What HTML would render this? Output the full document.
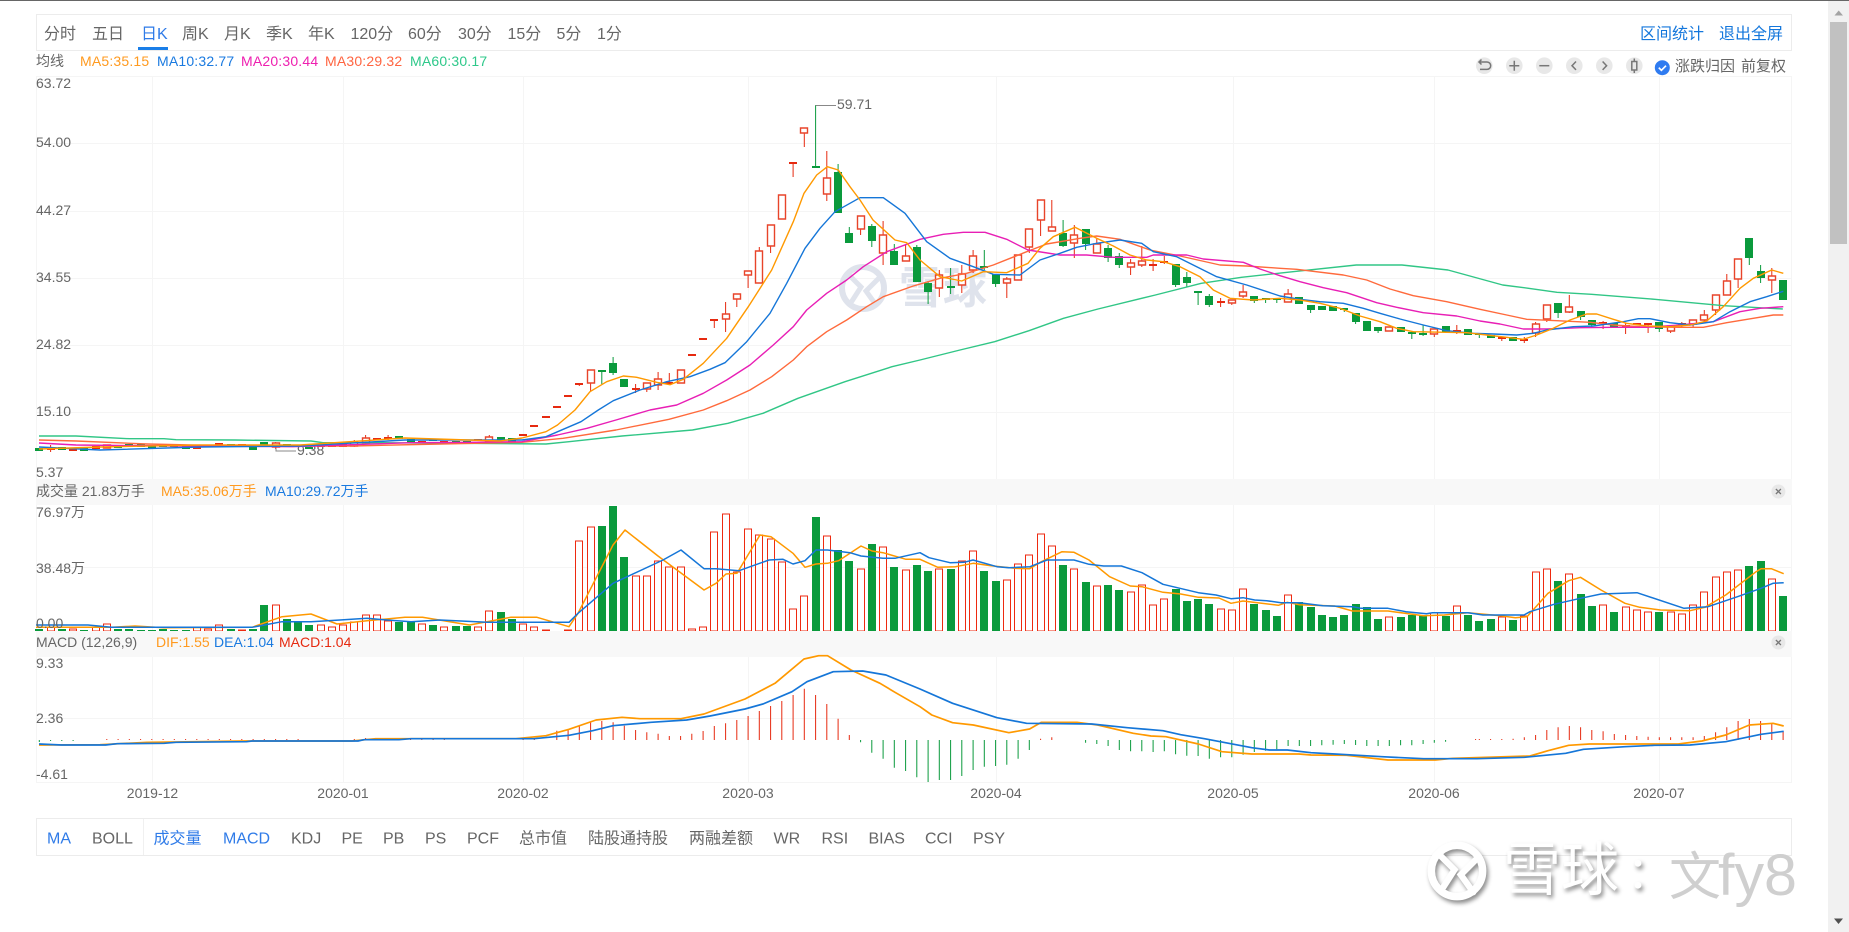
<!DOCTYPE html>
<html lang="zh-CN"><head><meta charset="utf-8"><title>K线</title>
<style>
html,body{margin:0;padding:0;background:#fff;overflow:hidden;width:1849px;height:932px}
svg{display:block;font-family:"Liberation Sans","Noto Sans CJK SC",sans-serif}
.a{font-size:14px;fill:#666}
.t{font-size:16px;fill:#666}
.b{font-size:16px;fill:#2f7be8}
.l{font-size:14px;letter-spacing:.18px}
</style></head><body>
<svg width="1849" height="932" viewBox="0 0 1849 932" xmlns="http://www.w3.org/2000/svg">
<rect width="1849" height="932" fill="#fff"/>
<rect width="1849" height="1" fill="#666"/>
<!-- top toolbar -->
<rect x="36.5" y="14.5" width="1755" height="36" fill="#fff" stroke="#ececec"/>
<text class="t" x="44" y="39">分时</text><text class="t" x="92" y="39">五日</text>
<text class="b" x="141" y="39">日K</text><text class="t" x="182" y="39">周K</text><text class="t" x="224" y="39">月K</text><text class="t" x="266" y="39">季K</text><text class="t" x="308" y="39">年K</text>
<text class="t" x="350.5" y="39">120分</text><text class="t" x="408" y="39">60分</text><text class="t" x="458" y="39">30分</text><text class="t" x="507.5" y="39">15分</text><text class="t" x="556.5" y="39">5分</text><text class="t" x="597" y="39">1分</text>
<rect x="138" y="47" width="30" height="3" fill="#1a7ee8"/>
<text class="t" x="1640" y="39" style="fill:#1477dc">区间统计</text><text class="t" x="1719" y="39" style="fill:#1477dc">退出全屏</text>
<!-- legend -->
<text class="a" x="36" y="66">均线</text>
<text class="l" x="80" y="66" fill="#ff9a1f">MA5:35.15</text>
<text class="l" x="157" y="66" fill="#1a7ae0">MA10:32.77</text>
<text class="l" x="241" y="66" fill="#ee1fb0">MA20:30.44</text>
<text class="l" x="325" y="66" fill="#ff6440">MA30:29.32</text>
<text class="l" x="410" y="66" fill="#2ec88a">MA60:30.17</text>
<!-- tool icons -->
<g fill="#e8e8e8"><circle cx="1484.3" cy="65.7" r="8.3"/><circle cx="1514.3" cy="65.7" r="8.3"/><circle cx="1544.3" cy="65.7" r="8.3"/><circle cx="1574.3" cy="65.7" r="8.3"/><circle cx="1604.3" cy="65.7" r="8.3"/><circle cx="1634.3" cy="65.7" r="8.3"/></g>
<g fill="none" stroke="#777" stroke-width="1.5">
<path d="M1479 62H1487a3.7 3.7 0 0 1 0 7.4H1480M1481.5 59.5L1479 62l2.5 2.5"/>
<path d="M1509.3 65.7h10M1514.3 60.7v10"/><path d="M1539.3 65.7h10"/>
<path d="M1576 61.5l-4 4.2 4 4.2"/><path d="M1602.6 61.5l4 4.2-4 4.2"/>
<path d="M1631.8 61.5h5v8.5h-5zM1634.3 58.5v3M1634.3 70v3"/></g>
<circle cx="1662.3" cy="67.7" r="7.5" fill="#2f7bf0"/><path d="M1658.8 67.7l2.6 2.6 4.6-4.6" fill="none" stroke="#fff" stroke-width="1.7"/>
<text x="1675" y="71" fill="#666" font-size="15">涨跌归因</text><text x="1741" y="71" fill="#666" font-size="15">前复权</text>
<!-- grids -->
<g stroke="#f5f5f5" fill="none">
<path d="M36.5 76V782M152.5 76V782M343.5 76V782M523.5 76V782M748.5 76V782M996.5 76V782M1233.5 76V782M1434.5 76V782M1659.5 76V782M1791.5 76V782"/>
<path d="M36 76.5H1792M36 143.5H1792M36 211.5H1792M36 278.5H1792M36 345.5H1792M36 412.5H1792M36 480.5H1792M36 567.5H1792M36 718.5H1792M36 782.5H1792"/>
</g>
<!-- centre watermark -->
<g transform="translate(863,288)" fill="none" stroke="#dfe3ec" stroke-width="6" stroke-linecap="round"><circle r="21"/><path d="M-13 -12L-2 -1L-11 13M15 -9L3 3L13 17" stroke-width="5"/></g>
<text x="899" y="303" font-size="44" font-weight="700" fill="#dfe3ec" style="font-family:'Noto Sans CJK SC',sans-serif">雪球</text>
<!-- axis labels -->
<text class="a" x="36" y="88">63.72</text><text class="a" x="36" y="147">54.00</text><text class="a" x="36" y="215">44.27</text><text class="a" x="36" y="282">34.55</text><text class="a" x="36" y="349">24.82</text><text class="a" x="36" y="416">15.10</text><text class="a" x="36" y="477">5.37</text>
<!-- candle wicks -->
<path fill="none" stroke="#e62a10" d="M50.6 445V452M275.6 442V449M354.3 440V447M365.6 435V444M388.1 435V440M489.3 435V442M579.3 383V386M590.6 370V391M635.6 384V393M646.8 383V392M658.1 372V390M669.3 373V385M714.3 320V328M725.6 302V332M736.8 294V307M748.1 271V288M759.3 247V283M770.6 225V253M793.1 163V177M804.3 128V147M826.8 151V201M860.6 216V235M883.1 221V265M905.6 245V261M939.3 270V297M961.8 265V293M973.1 250V273M1006.8 277V298M1029.3 229V253M1040.6 200V236M1051.8 200V231M1074.3 225V258M1096.8 238V253M1130.6 259V275M1141.8 246V267M1153.1 259V271M1164.3 256V264M1220.6 298V307M1231.8 300V305M1243.1 285V298M1288.1 289V302M1434.3 329V337M1456.8 325V334M1501.8 338V341M1524.3 337V343M1535.6 322V337M1546.8 305V322M1569.3 295V313M1603.1 321V329M1625.6 323V334M1648.1 324V333M1670.6 326V333M1681.8 322V327M1693.1 320V327M1704.3 310V323M1715.6 295V315M1726.8 274V295M1738.1 259V288M1771.8 268V293"/>
<path fill="none" stroke="#0a9a3c" d="M601.8 370V384M613.1 357V375M815.6 105V167M838.1 164V172M849.3 227V233M871.8 224V247M894.3 244V251M916.8 245V247M928.1 281V304M950.6 268V294M984.3 250V270M995.6 284V287M1063.1 220V247M1085.6 244V250M1108.1 245V262M1119.3 253V268M1175.6 285V287M1186.8 272V287M1198.1 292V305M1209.3 294V307M1254.3 300V303M1265.6 299V303M1276.8 299V303M1310.6 310V313M1344.3 310V312M1355.6 322V324M1378.1 331V333M1411.8 334V339M1423.1 325V336M1479.3 335V338M1558.1 313V318M1580.6 317V320M1591.8 325V327M1659.3 329V332M1749.3 258V265M1760.6 265V283"/>
<!-- min/max marks -->
<path fill="none" stroke="#888" d="M815.6 105.5H836M276 443V451H296"/>
<text class="a" x="837" y="109">59.71</text><text class="a" x="297" y="455">9.38</text>
<!-- candle bodies: green -->
<path fill="#0a9a3c" d="M35 448h8V451h-8zM58 447h8V450h-8zM80 448h8V451h-8zM114 445h8V448h-8zM125 444h8V447h-8zM137 444h8V447h-8zM148 445h8V448h-8zM159 445h8V447h-8zM170 445h8V447h-8zM182 446h8V449h-8zM227 444h8V446h-8zM249 446h8V450h-8zM260 442h8V445h-8zM283 444h8V446h-8zM294 445h8V447h-8zM305 447h8V449h-8zM395 436h8V439h-8zM407 439h8V443h-8zM429 439h8V441h-8zM452 441h8V443h-8zM463 441h8V444h-8zM497 437h8V441h-8zM508 438h8V442h-8zM598 370h8V372h-8zM609 363h8V373h-8zM620 379h8V387h-8zM812 166h8V168h-8zM834 172h8V213h-8zM845 233h8V243h-8zM868 226h8V241h-8zM890 251h8V265h-8zM913 247h8V282h-8zM924 283h8V292h-8zM947 286h8V288h-8zM980 266h8V268h-8zM992 274h8V284h-8zM1059 233h8V246h-8zM1082 229h8V244h-8zM1104 248h8V258h-8zM1115 256h8V265h-8zM1172 264h8V285h-8zM1183 277h8V283h-8zM1194 291h8V293h-8zM1205 296h8V305h-8zM1250 296h8V301h-8zM1262 298h8V300h-8zM1273 298h8V300h-8zM1295 297h8V304h-8zM1307 305h8V310h-8zM1318 306h8V310h-8zM1329 306h8V311h-8zM1340 308h8V310h-8zM1352 313h8V322h-8zM1363 321h8V331h-8zM1374 327h8V331h-8zM1397 327h8V332h-8zM1408 332h8V334h-8zM1419 333h8V335h-8zM1442 326h8V332h-8zM1464 329h8V335h-8zM1475 333h8V335h-8zM1487 335h8V338h-8zM1509 337h8V341h-8zM1554 303h8V313h-8zM1577 311h8V317h-8zM1588 320h8V325h-8zM1610 323h8V327h-8zM1655 322h8V329h-8zM1745 238h8V258h-8zM1757 271h8V278h-8zM1779 280h8V300h-8z"/>
<!-- red solid -->
<path fill="#e62a10" d="M47 447h8V450h-8zM69 448h8V451h-8zM92 446h8V449h-8zM193 446h8V449h-8zM204 445h8V447h-8zM215 443h8V445h-8zM238 444h8V446h-8zM317 445h8V447h-8zM328 445h8V447h-8zM339 444h8V447h-8zM373 438h8V440h-8zM384 437h8V439h-8zM418 441h8V443h-8zM440 441h8V443h-8zM474 439h8V441h-8zM519 434h8V436h-8zM530 425h8V427h-8zM542 416h8V418h-8zM553 406h8V408h-8zM564 395h8V397h-8zM575 383h8V385h-8zM632 388h8V390h-8zM665 382h8V384h-8zM688 354h8V356h-8zM699 338h8V340h-8zM710 319h8V321h-8zM789 162h8V164h-8zM1149 264h8V266h-8zM1160 261h8V263h-8zM1217 301h8V303h-8zM1453 330h8V332h-8zM1498 337h8V339h-8zM1520 339h8V341h-8zM1599 322h8V324h-8zM1622 325h8V327h-8zM1633 323h8V325h-8zM1644 323h8V325h-8zM1678 323h8V325h-8z"/>
<!-- red hollow -->
<path fill="#fff" stroke="#e8442a" stroke-width="1.4" d="M103.5 445h7V448h-7zM272.5 443h7V447h-7zM350.5 442h7V446h-7zM362.5 438h7V443h-7zM485.5 437h7V441h-7zM587.5 370h7V383h-7zM643.5 383h7V389h-7zM654.5 379h7V385h-7zM677.5 370h7V383h-7zM722.5 314h7V319h-7zM733.5 294h7V299h-7zM744.5 271h7V275h-7zM755.5 251h7V283h-7zM767.5 225h7V246h-7zM778.5 195h7V219h-7zM800.5 128h7V133h-7zM823.5 178h7V194h-7zM857.5 216h7V229h-7zM879.5 235h7V253h-7zM902.5 256h7V261h-7zM935.5 275h7V288h-7zM958.5 274h7V285h-7zM969.5 256h7V270h-7zM1003.5 279h7V283h-7zM1014.5 255h7V280h-7zM1025.5 229h7V247h-7zM1037.5 200h7V220h-7zM1048.5 227h7V231h-7zM1070.5 235h7V243h-7zM1093.5 244h7V253h-7zM1127.5 263h7V267h-7zM1138.5 261h7V265h-7zM1228.5 300h7V303h-7zM1239.5 292h7V296h-7zM1284.5 294h7V302h-7zM1385.5 327h7V331h-7zM1430.5 329h7V334h-7zM1532.5 324h7V333h-7zM1543.5 305h7V319h-7zM1565.5 307h7V312h-7zM1667.5 326h7V331h-7zM1689.5 320h7V324h-7zM1700.5 315h7V320h-7zM1712.5 295h7V310h-7zM1723.5 281h7V295h-7zM1734.5 259h7V279h-7zM1768.5 276h7V280h-7z"/>
<!-- MA lines -->
<g fill="none" stroke-width="1.4" stroke-linejoin="round">
<polyline stroke="#31c686" points="39,436 76,436 129,438.7 164,438.7 176,439.7 235,440 311,441 323,442.7 381,442.7 458,443.3 546,444 569,441.7 622,436 692.5,430 728,423.3 763,413.3 798,398.3 845,381.7 892,366.7 920,360 960,350 994.6,341.7 1029,330.7 1063.5,318.3 1098,309 1155.4,295 1201.3,283.3 1241.5,277.3 1293,271.7 1356.3,265 1402,265 1448,270 1502.7,285 1528.5,288.3 1557,292.3 1591.6,294.3 1654.8,299.3 1723.7,305.7 1782.8,309"/>
<polyline stroke="#ff6a3c" points="39,440 76,441 147,444 235,446 352,446 440,444 522,442.3 563,438.3 616,430 669,419.3 703.3,410 726.7,400.7 750,390 771.7,376.7 793.3,360 806.7,346.7 826.7,331.7 846.7,320 866.7,306.7 883.3,296.7 913.3,286 940,278.3 966.7,273.3 993.3,265 1026.7,251.7 1046.7,244 1080,238.3 1096.7,236 1120,239.3 1150,250 1180,256 1220,265 1246.7,266 1280,268.3 1296.7,269.3 1343.3,275 1366.7,280 1390,289 1413.3,295.7 1446.7,301.7 1480,309.3 1506.7,315 1526.7,319.3 1556.7,320.7 1590,322.3 1613.3,325 1640,326.7 1680,327.3 1703.3,327.3 1726.7,322.7 1753.3,318.3 1773.3,315 1783.3,315"/>
<polyline stroke="#e81fb5" points="39,443 76,445 176,446 293,446.7 411,442.7 469.5,442.3 522,441.7 557.5,435 587,428.3 616,420 650,410 676.7,405 703.3,393.3 726.7,380 750,365 773.3,345 793.3,326.7 806.7,310 826.7,293.3 846.7,280 863.3,266.7 886.7,251.7 920,239.3 943.3,234.3 963.3,232.3 985,232.3 1006.7,239.3 1028,250 1060,255 1086.7,255 1113.3,257.3 1146.7,257.3 1153.3,255 1186.7,255 1203.3,259 1243.3,262.3 1260,269 1280,275.7 1300,281.7 1323.3,287.7 1346.7,292.7 1376.7,302.7 1396.7,307.3 1423.3,312.7 1456.7,316 1480,321 1500,324 1523.3,329 1546.7,329 1580,327.7 1613.3,327.3 1646.7,327.3 1680,325 1713.3,321.7 1740,311.7 1760,308.3 1783.3,306.7"/>
<polyline stroke="#1576d8" points="39,447 100,450 200,447 300,446 405,440 522,440 546,436.7 581,421.7 598.3,410 613.3,400.7 640,390 666.7,381.7 690,376.7 710,369.3 725,362.7 746.7,341.7 770,313.3 786.7,283.3 805,248.3 820,228.3 835,211.7 860,197.7 883.3,197.7 905,213.3 926.7,241.7 950,258.3 973.3,266.7 993.3,274.3 1020,275 1040,260 1060,253.3 1076.7,247.3 1096.7,243.3 1120,240 1141.7,243.3 1153.3,251.7 1176.7,256.7 1196.7,266.7 1216.7,276.7 1246.7,285 1280,296 1300,299.3 1320,301.7 1343.3,303.3 1363.3,308.3 1380,313.3 1400,319 1423.3,325 1446.7,330.7 1473.3,333.3 1493.3,334 1516.7,335 1533.3,333.3 1546.7,330 1573.3,326.7 1593.3,326 1623.3,321.7 1638.3,318.7 1650,318.7 1670,322.7 1690,325 1713.3,321.7 1730,311.7 1750,301.7 1766.7,296.7 1783.3,291.3"/>
<polyline stroke="#ff9900" points="39,449 100,447 200,445 300,445 405,438 500,441 522,438 546,431.7 557.5,425 575,410 590,391.7 606.7,381.7 623.3,376 636.7,377.3 656.7,382.3 670,384.7 683.3,379.3 703.3,363.3 726.7,338.3 748.3,306.7 771.7,270 793.3,221.7 804,193.3 816.7,175 827.3,166.7 838.3,170 850,186.7 860,200 873,220 895,240 906.7,242.7 920,260 940,276.7 961.7,281 983.3,271.7 1006.7,272.7 1028,263.3 1040,248.3 1053.3,236.7 1075,227.3 1096.7,238.3 1113.3,246 1130,255 1146.7,260 1163.3,261.7 1180,266.7 1200,276.7 1213.3,290 1230,298.3 1253.3,300 1280,298.3 1300,300 1320,303.3 1340,308.3 1360,316 1380,321.7 1396.7,328.3 1413.3,331.7 1446.7,332.3 1466.7,332.7 1486.7,335 1506.7,337.3 1523.3,339.3 1536.7,335 1553.3,328.3 1570,320 1586.7,314 1596.7,314 1613.3,319.3 1626.7,323.3 1646.7,326 1670,326.7 1690,325 1706.7,321 1723.3,306.7 1740,288.3 1753.3,278.3 1771.7,270 1783.3,273.3"/>
</g>
<!-- volume header -->
<rect x="36" y="479" width="1756" height="26" fill="#f8f8f8"/>
<text class="a" x="36" y="496">成交量 21.83万手</text>
<text font-size="14" x="161" y="496" fill="#ff9a1f">MA5:35.06万手</text><text font-size="14" x="265" y="496" fill="#1a7ae0">MA10:29.72万手</text>
<circle cx="1778.4" cy="491.5" r="7" fill="#e8e8e8"/><path d="M1775.9 489l5 5M1780.9 489l-5 5" stroke="#777" stroke-width="1.3"/>
<!-- volume bars -->
<path fill="#fff" stroke="#ee2a10" d="M47.5 627h7V631h-7zM69.5 629h7V631h-7zM92.5 627h7V631h-7zM103.5 624h7V631h-7zM193.5 627h7V631h-7zM204.5 629h7V631h-7zM215.5 625h7V631h-7zM238.5 630h7V631h-7zM272.5 605h7V631h-7zM317.5 625h7V631h-7zM328.5 627h7V631h-7zM339.5 625h7V631h-7zM350.5 622h7V631h-7zM362.5 615h7V631h-7zM373.5 615h7V631h-7zM384.5 621h7V631h-7zM418.5 624h7V631h-7zM440.5 627h7V631h-7zM474.5 627h7V631h-7zM485.5 611h7V631h-7zM519.5 624h7V631h-7zM530.5 627h7V631h-7zM542.5 630h7V631h-7zM564.5 630h7V631h-7zM575.5 541h7V631h-7zM587.5 527h7V631h-7zM632.5 576h7V631h-7zM643.5 576h7V631h-7zM654.5 561h7V631h-7zM665.5 567h7V631h-7zM677.5 567h7V631h-7zM688.5 629h7V631h-7zM699.5 627h7V631h-7zM710.5 532h7V631h-7zM722.5 514h7V631h-7zM733.5 572h7V631h-7zM744.5 529h7V631h-7zM755.5 535h7V631h-7zM767.5 539h7V631h-7zM778.5 562h7V631h-7zM789.5 609h7V631h-7zM800.5 596h7V631h-7zM823.5 536h7V631h-7zM857.5 569h7V631h-7zM879.5 547h7V631h-7zM902.5 570h7V631h-7zM935.5 569h7V631h-7zM958.5 561h7V631h-7zM969.5 551h7V631h-7zM1003.5 580h7V631h-7zM1014.5 564h7V631h-7zM1025.5 555h7V631h-7zM1037.5 534h7V631h-7zM1048.5 546h7V631h-7zM1070.5 569h7V631h-7zM1093.5 586h7V631h-7zM1127.5 592h7V631h-7zM1138.5 585h7V631h-7zM1149.5 605h7V631h-7zM1160.5 599h7V631h-7zM1217.5 609h7V631h-7zM1228.5 610h7V631h-7zM1239.5 589h7V631h-7zM1284.5 595h7V631h-7zM1385.5 617h7V631h-7zM1430.5 613h7V631h-7zM1453.5 606h7V631h-7zM1498.5 617h7V631h-7zM1520.5 616h7V631h-7zM1532.5 572h7V631h-7zM1543.5 569h7V631h-7zM1565.5 574h7V631h-7zM1599.5 605h7V631h-7zM1622.5 607h7V631h-7zM1633.5 610h7V631h-7zM1644.5 612h7V631h-7zM1667.5 612h7V631h-7zM1678.5 614h7V631h-7zM1689.5 605h7V631h-7zM1700.5 592h7V631h-7zM1712.5 577h7V631h-7zM1723.5 572h7V631h-7zM1734.5 570h7V631h-7zM1768.5 579h7V631h-7z"/>
<path fill="#0a9a3c" d="M35 629h8V631h-8zM58 629h8V631h-8zM80 630h8V631h-8zM114 629h8V631h-8zM125 629h8V631h-8zM137 630h8V631h-8zM148 630h8V631h-8zM159 629h8V631h-8zM170 630h8V631h-8zM182 630h8V631h-8zM227 629h8V631h-8zM249 629h8V631h-8zM260 605h8V631h-8zM283 619h8V631h-8zM294 622h8V631h-8zM305 625h8V631h-8zM395 622h8V631h-8zM407 622h8V631h-8zM429 625h8V631h-8zM452 626h8V631h-8zM463 626h8V631h-8zM497 612h8V631h-8zM508 619h8V631h-8zM598 526h8V631h-8zM609 506h8V631h-8zM620 557h8V631h-8zM812 517h8V631h-8zM834 550h8V631h-8zM845 561h8V631h-8zM868 544h8V631h-8zM890 567h8V631h-8zM913 565h8V631h-8zM924 571h8V631h-8zM947 569h8V631h-8zM980 571h8V631h-8zM992 581h8V631h-8zM1059 565h8V631h-8zM1082 582h8V631h-8zM1104 585h8V631h-8zM1115 590h8V631h-8zM1172 589h8V631h-8zM1183 601h8V631h-8zM1194 599h8V631h-8zM1205 604h8V631h-8zM1250 604h8V631h-8zM1262 610h8V631h-8zM1273 616h8V631h-8zM1295 602h8V631h-8zM1307 607h8V631h-8zM1318 615h8V631h-8zM1329 617h8V631h-8zM1340 615h8V631h-8zM1352 604h8V631h-8zM1363 607h8V631h-8zM1374 619h8V631h-8zM1397 617h8V631h-8zM1408 615h8V631h-8zM1419 615h8V631h-8zM1442 616h8V631h-8zM1464 615h8V631h-8zM1475 621h8V631h-8zM1487 619h8V631h-8zM1509 620h8V631h-8zM1554 581h8V631h-8zM1577 594h8V631h-8zM1588 606h8V631h-8zM1610 612h8V631h-8zM1655 612h8V631h-8zM1745 566h8V631h-8zM1757 561h8V631h-8zM1779 596h8V631h-8z"/>
<g fill="none" stroke-width="1.5" stroke-linejoin="round">
<polyline stroke="#ff9900" points="36,627.3 111.5,627.3 135,626 164,627.7 252,627.3 282,616.7 311,614 337,624 367,620.7 405,617.3 422.5,617.3 469.5,625 510.5,617.3 537,617.3 569,626.7 578,613.3 613,545 625,530 658,556 704,590 716,583.3 726,574 737,573.3 760,535 771,536.7 793,553.3 805,567.3 816,564 827.5,563.3 838.6,560.7 861,546 872,551 883,552.7 906,559.3 920,559.3 937.8,567.3 955.5,566.7 973.3,563.3 991,565.7 1014.8,568.3 1029.6,568.7 1041.4,561.7 1062,551.7 1074,552.3 1089,560 1109.6,576.7 1130.3,586 1142,586.7 1163,592.3 1180.7,594 1198.4,597.3 1219,598 1231,603.3 1243,601 1278.4,605.3 1287.3,602.3 1299,604.7 1334.7,606 1352.5,611 1388,611 1423.6,615.7 1444.3,615 1468,612.7 1500.6,615.7 1515.4,617.7 1527,616.7 1548,593.3 1568.7,580.7 1580.5,577.3 1601,590 1625,603.3 1639.8,607.3 1660.5,610 1690,610.7 1705,607.3 1725.7,595 1755.3,572.3 1761,568.7 1771.3,568.7 1783.7,573.7"/>
<polyline stroke="#1576d8" points="36,625 88,625 111.5,627.3 252,627.3 282,621.7 311,621.7 340,620 367,618.3 387,620 411,621.7 440,620 487,622.3 569,622.3 578,613.3 613,583.3 663,560 681,550 704,568.7 716,568.7 739,570.7 769,560 783,559.3 793,564 805,560.7 816,550 827.5,550 850,552.7 861,556 883,558.3 895,558.3 920,552.7 929,557.7 950,562.7 964,562.3 973,560 997,566.7 1009,567.7 1030,566.7 1047,560 1074,560 1089,564.3 1103.6,566 1121.4,566 1142,572.7 1163,584.3 1198.4,592.7 1216,595 1231,598.7 1243,597.7 1254.7,600 1266.6,600.7 1281,602.7 1299,602.7 1323,605.7 1352.5,606.7 1361,608.3 1388,608.3 1405.8,611.7 1426.5,613.7 1432.4,612.7 1468,612.7 1483,615 1524,615 1530,611.7 1554,604.3 1580.5,598.3 1601,594 1637,592.7 1684,608.3 1708,606.7 1737.5,596.7 1761,588.3 1773,583.3 1783.7,582.7"/>
</g>
<text class="a" x="36" y="517">76.97万</text><text class="a" x="36" y="573">38.48万</text><text class="a" x="36" y="628">0.00</text>
<!-- macd header -->
<rect x="36" y="631" width="1756" height="26" fill="#f8f8f8"/>
<text class="a" x="36" y="647">MACD (12,26,9)</text>
<text font-size="14" x="156" y="647" fill="#ff9a1f">DIF:1.55</text><text font-size="14" x="214" y="647" fill="#1a7ae0">DEA:1.04</text><text font-size="14" x="279" y="647" fill="#e62a10">MACD:1.04</text>
<circle cx="1778.4" cy="642.5" r="7" fill="#e8e8e8"/><path d="M1775.9 640l5 5M1780.9 640l-5 5" stroke="#777" stroke-width="1.3"/>
<text class="a" x="36" y="668">9.33</text><text class="a" x="36" y="723">2.36</text><text class="a" x="36" y="779">-4.61</text>
<!-- macd bars -->
<path fill="none" stroke="#e62a10" d="M106.8 739V740M118.1 739V740M129.3 739V740M140.6 739V740M151.8 739V740M163.1 739V740M174.3 739V740M185.6 739V740M196.8 739V740M208.1 739V740M219.3 739V740M230.6 739V740M241.8 739V740M253.1 739V740M264.3 739V740M275.6 739V740M286.8 739V740M298.1 739V740M354.3 739V740M365.6 738V740M376.8 738V740M388.1 738V740M399.3 738V740M410.6 739V740M421.8 739V740M433.1 739V740M444.3 739V740M523.1 739V740M534.3 739V740M556.8 730.7V740M568.1 729.3V740M579.3 726V740M590.6 721.7V740M601.8 721V740M613.1 722.3V740M624.3 725.7V740M635.6 730V740M646.8 732.3V740M658.1 733.7V740M669.3 736V740M680.6 736V740M691.8 733.7V740M703.1 731V740M714.3 726V740M725.6 723.3V740M736.8 720V740M748.1 716V740M759.3 711V740M770.6 706V740M781.8 701V740M793.1 695V740M804.3 688.7V740M815.6 695V740M826.8 704V740M838.1 718.7V740M849.3 735V740M1040.6 738.7V740M1051.8 737.3V740M1475.6 739V740M1479.3 739V740M1490.6 739V740M1501.8 739V740M1513.1 738.7V740M1524.3 737.3V740M1535.6 735V740M1546.8 730V740M1558.1 727.3V740M1569.3 726V740M1580.6 727.3V740M1591.8 730V740M1603.1 731.3V740M1614.3 734V740M1625.6 735V740M1636.8 736V740M1648.1 736.7V740M1659.3 737.3V740M1670.6 737.3V740M1681.8 737.3V740M1693.1 737.3V740M1704.3 736V740M1715.6 732.3V740M1726.8 727.3V740M1738.1 721V740M1749.3 719V740M1760.6 721V740M1771.8 723.3V740M1783.1 731V740"/>
<path fill="none" stroke="#0a9a3c" d="M39.3 740V742M50.6 740V741M61.8 740V741M73.1 740V741M860.6 740V742.3M871.8 740V752.7M883.1 740V758.7M894.3 740V767.7M905.6 740V771M916.8 740V777.3M928.1 740V782M939.3 740V780M950.6 740V780M961.8 740V776M973.1 740V770M984.3 740V766.7M995.6 740V766M1006.8 740V764.7M1018.1 740V758.7M1029.3 740V750M1085.6 740V742.7M1096.8 740V744M1108.1 740V746M1119.3 740V750M1130.6 740V751.3M1141.8 740V751.3M1153.1 740V752M1164.3 740V751.3M1175.6 740V754.3M1186.8 740V755.7M1198.1 740V756M1209.3 740V758.7M1220.6 740V757.3M1231.8 740V757.3M1243.1 740V754.7M1254.3 740V752M1265.6 740V750.7M1276.8 740V749.3M1288.1 740V746M1299.3 740V746M1310.6 740V746M1321.8 740V745.3M1333.1 740V744.7M1344.3 740V744M1355.6 740V745M1366.8 740V746M1378.1 740V746M1389.3 740V746M1400.6 740V745.3M1411.8 740V745.3M1423.1 740V744M1434.3 740V742.7M1445.6 740V741.7"/>
<g fill="none" stroke-width="1.7" stroke-linejoin="round">
<polyline stroke="#ff9900" points="39,745 100,744.7 147,742.3 176,742 246.5,741 352,741 375.6,738.7 411,738.7 516,738.7 546,735.7 569,729.3 596,720 622,717.3 640,718.7 681,718.7 704,714 745,699 775,683.3 804,659 818.7,655.7 827.5,655.7 851,670 880,683.3 895,692.3 920,706.7 931.8,715 952.6,722.7 973.3,725 1008.9,732.7 1029.6,729 1041.4,722.3 1077,722.3 1097.7,725 1133.3,733.3 1151,736 1165.9,736.7 1198.4,744 1222,751.7 1251.8,754 1299,754 1311,755 1346.5,755.3 1388,760 1435.4,760 1453,758.3 1530,756 1548,750.7 1568.7,745.3 1589.4,744 1678.3,744 1702,741 1725.7,735 1749.3,725 1773,723.3 1783.7,726"/>
<polyline stroke="#1576d8" points="39,744 61.6,745 105.6,745 117,743.7 164,743.3 176,742.3 246.5,741.7 252,741 358,741 364,739.7 399,739.7 411,738.7 534,738.7 569,735.3 592.7,730.7 613,725.7 651,722.3 686.6,720 710,716 745,709 763,704 792,691.7 807,681.7 833.3,671.7 862.7,671 886,675 920,689 952.6,703.3 997,717.7 1026.6,723.3 1091.8,724 1127.3,727.7 1163,730.7 1180.7,734.7 1204.4,738.7 1234,744.3 1251.8,747.7 1269.5,750 1287.3,750 1311,752.7 1334.7,754 1382,756.7 1423.6,758.7 1476.9,758.7 1524.3,757.3 1565.7,753.3 1583.5,749.3 1625,746.7 1654.6,745.3 1690,745 1725.7,741.7 1761,734.3 1783.7,731.3"/>
</g>
<!-- dates -->
<g class="a" text-anchor="middle"><text class="a" x="152.5" y="798">2019-12</text><text class="a" x="343" y="798">2020-01</text><text class="a" x="523" y="798">2020-02</text><text class="a" x="748" y="798">2020-03</text><text class="a" x="996" y="798">2020-04</text><text class="a" x="1233" y="798">2020-05</text><text class="a" x="1434" y="798">2020-06</text><text class="a" x="1659" y="798">2020-07</text></g>
<!-- bottom toolbar -->
<rect x="36.5" y="818.5" width="1755" height="37" fill="#fff" stroke="#ececec"/>
<path d="M143.5 819V855" stroke="#f0f0f0"/>
<text class="b" x="47" y="843.5">MA</text><text class="t" x="92" y="843.5">BOLL</text><text class="b" x="153.5" y="843.5">成交量</text><text class="b" x="223" y="843.5">MACD</text><text class="t" x="291" y="843.5">KDJ</text><text class="t" x="341.5" y="843.5">PE</text><text class="t" x="383" y="843.5">PB</text><text class="t" x="425" y="843.5">PS</text><text class="t" x="467" y="843.5">PCF</text><text class="t" x="519" y="843.5">总市值</text><text class="t" x="588" y="843.5">陆股通持股</text><text class="t" x="689" y="843.5">两融差额</text><text class="t" x="773.5" y="843.5">WR</text><text class="t" x="821.5" y="843.5">RSI</text><text class="t" x="868.5" y="843.5">BIAS</text><text class="t" x="925" y="843.5">CCI</text><text class="t" x="973" y="843.5">PSY</text>
<!-- bottom-right watermark -->
<g style="filter:drop-shadow(2px 3px 2px rgba(0,0,0,.45))">
<g transform="translate(1457,871) scale(1.25)" fill="none" stroke="#fff" stroke-width="6" stroke-linecap="round"><circle r="20.5"/><path d="M-13 -12L-2 -1L-11 13M15 -9L3 3L13 17" stroke-width="5"/></g>
<text x="1503" y="890" font-size="58" fill="#fff" style="font-family:'Noto Sans CJK SC',sans-serif">雪球</text>
<text x="1627" y="888" font-size="44" fill="#fff" style="font-family:'Noto Sans CJK SC',sans-serif">：</text>
</g>
<text x="1669" y="895" font-size="52" fill="#cfcfcf" style="font-family:'Noto Sans CJK SC',sans-serif">文</text>
<text x="1718" y="895" font-size="58" fill="#cfcfcf" textLength="79" lengthAdjust="spacingAndGlyphs">fy8</text>
<!-- scrollbar -->
<rect x="1828" y="0" width="21" height="932" fill="#f1f1f1"/><rect x="1828" y="0" width="21" height="1" fill="#666"/>
<rect x="1830" y="22" width="17" height="222" fill="#c1c1c1"/>
<path d="M1834.5 15.5L1838.7 10.5L1843 15.5z" fill="#a3a3a3"/><path d="M1834 918.5L1838.5 924L1843 918.5z" fill="#505050"/>
</svg>
</body></html>
